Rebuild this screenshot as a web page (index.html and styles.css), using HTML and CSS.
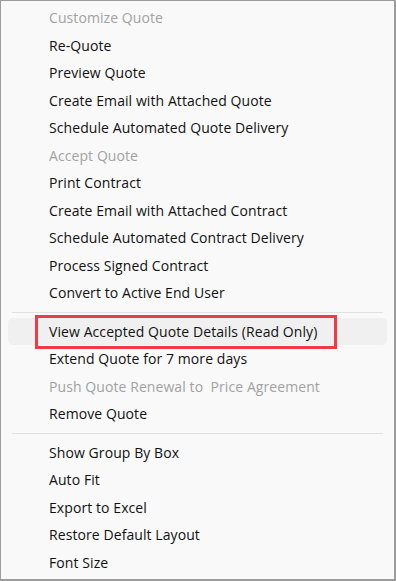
FILE: index.html
```html
<!DOCTYPE html>
<html>
<head lang="en">
    <meta charset="UTF-8">
    <title>Quote menu</title>
    <link rel="stylesheet" href="styles.css">
</head>
<body>
<div class="menu">
    <ul class="group">
        <li class="off">Customize Quote</li>
        <li>Re-Quote</li>
        <li>Preview Quote</li>
        <li>Create Email with Attached Quote</li>
        <li>Schedule Automated Quote Delivery</li>
        <li class="off">Accept Quote</li>
        <li>Print Contract</li>
        <li>Create Email with Attached Contract</li>
        <li>Schedule Automated Contract Delivery</li>
        <li>Process Signed Contract</li>
        <li>Convert to Active End User</li>
    </ul>
    <div class="sep"></div>
    <ul class="group">
        <li class="hover"><span class="mark">View Accepted Quote Details (Read Only)</span></li>
        <li>Extend Quote for 7 more days</li>
        <li class="off">Push Quote Renewal to&nbsp; Price Agreement</li>
        <li>Remove Quote</li>
    </ul>
    <div class="sep"></div>
    <ul class="group">
        <li>Show Group By Box</li>
        <li>Auto Fit</li>
        <li>Export to Excel</li>
        <li>Restore Default Layout</li>
        <li>Font Size</li>
    </ul>
</div>
</body>
</html>
```

FILE: styles.css
```css
*{
    margin: 0;
    padding: 0;
    box-sizing: border-box;
}
ul{
    list-style: none;
}
body{
    background: #fff;
    font-family: "Open Sans", "Noto Sans", sans-serif;
}
.menu{
    width: 396px;
    height: 581px;
    background: #f9f9f9;
    border: 1px solid #9c9c9c;
    border-right-width: 2px;
    border-bottom-width: 2px;
    padding: 3px 7px 0 7px;
}
.group li{
    height: 27.5px;
    line-height: 27.5px;
    padding-left: 41px;
    font-size: 14px;
    letter-spacing: 0.08px;
    color: #111;
    white-space: nowrap;
    border-radius: 5px;
}
.group li.off{
    color: #a2a2a2;
}
.group li.hover{
    background: #f0f0f0;
    position: relative;
}
.mark{
    position: relative;
}
.mark::after{
    content: "";
    position: absolute;
    left: -14px;
    right: -20px;
    top: -7px;
    bottom: -8px;
    border: 3px solid #ee3b45;
}
.sep{
    height: 1px;
    background: #e2e2e2;
    margin: 5px 4px 5px 4px;
}
```
